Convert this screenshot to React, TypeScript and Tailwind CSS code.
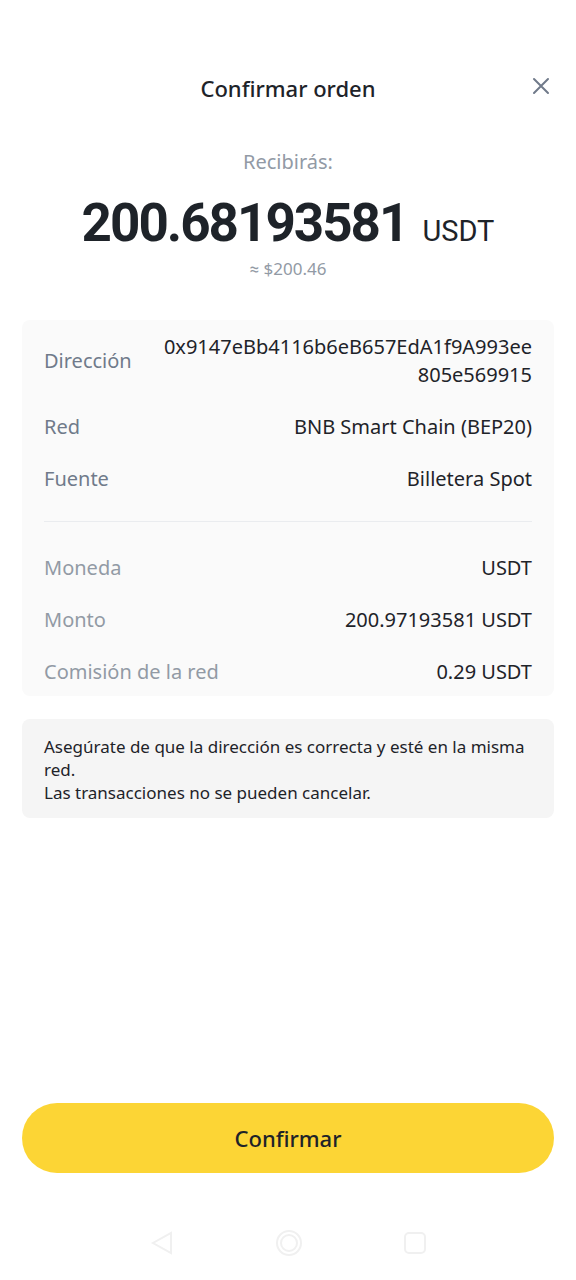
import React from 'react';

const rows1 = [
  { label: 'Red', value: 'BNB Smart Chain (BEP20)' },
  { label: 'Fuente', value: 'Billetera Spot' },
];

const rows2 = [
  { label: 'Moneda', value: 'USDT' },
  { label: 'Monto', value: '200.97193581 USDT' },
  { label: 'Comisión de la red', value: '0.29 USDT' },
];

const Row: React.FC<{ label: string; value: React.ReactNode; dark?: boolean }> = ({ label, value, dark }) => (
  <div className="flex items-center justify-between h-[28px]">
    <span className={dark ? 'text-[#707a8a]' : 'text-[#929aa5]'}>{label}</span>
    <span className="text-right text-[#1e2329]">{value}</span>
  </div>
);

const App: React.FC = () => {
  return (
    <div
      className="relative w-[576px] h-[1280px] bg-white flex flex-col overflow-hidden"
      style={{ fontFamily: '"Noto Sans", Roboto, sans-serif' }}
    >
      {/* header */}
      <div className="relative mt-[60px] h-[56px] flex items-center justify-center">
        <h1 className="text-[22px] font-medium text-[#1e2329]">Confirmar orden</h1>
        <button className="absolute right-[24px] top-[15px] w-[22px] h-[22px] flex items-center justify-center">
          <svg width="18" height="18" viewBox="0 0 18 18" fill="none" stroke="#707a8a" strokeWidth="2" strokeLinecap="round">
            <path d="M2 2L16 16M16 2L2 16" />
          </svg>
        </button>
      </div>

      {/* amount */}
      <div className="flex flex-col items-center">
        <p className="mt-[32px] text-[20px] leading-[28px] text-[#929aa5]">Recibirás:</p>
        <div className="mt-[17px] flex items-baseline gap-[15px]" style={{ fontFamily: 'Roboto, sans-serif' }}>
          <span className="text-[53px] leading-[60px] font-bold tracking-[-2px] text-[#1e2329]">200.68193581</span>
          <span className="text-[29px] text-[#1e2329]">USDT</span>
        </div>
        <p className="mt-[4px] text-[17px] leading-[22px] text-[#929aa5]">≈ $200.46</p>
      </div>

      {/* details card */}
      <div className="mx-[22px] mt-[40px] rounded-[8px] bg-[#fafafa] px-[22px] pt-[13px] pb-[10px] text-[20px]">
        <div className="flex items-center justify-between">
          <span className="text-[#707a8a]">Dirección</span>
          <span className="text-right leading-[28px] text-[#1e2329]">
            0x9147eBb4116b6eB657EdA1f9A993ee
            <br />
            805e569915
          </span>
        </div>
        <div className="mt-[24px] flex flex-col gap-[24px]">
          {rows1.map(r => (
            <Row key={r.label} label={r.label} value={r.value} dark />
          ))}
        </div>
        <div className="mt-[28px] h-px bg-[#eaecef]" />
        <div className="mt-[32px] flex flex-col gap-[24px]">
          {rows2.map(r => (
            <Row key={r.label} label={r.label} value={r.value} />
          ))}
        </div>
      </div>

      {/* notice */}
      <div className="mx-[22px] mt-[23px] rounded-[8px] bg-[#f5f5f5] px-[22px] pt-[16px] pb-[14px] text-[17px] leading-[23px] text-[#1e2329]">
        <p className="whitespace-nowrap">Asegúrate de que la dirección es correcta y esté en la misma</p>
        <p>red.</p>
        <p>Las transacciones no se pueden cancelar.</p>
      </div>

      <div className="flex-1" />

      {/* button */}
      <div className="px-[22px]">
        <button className="w-full h-[70px] rounded-full bg-[#fcd535] text-[22px] font-medium text-[#1e2329]">
          Confirmar
        </button>
      </div>

      {/* system nav */}
      <div className="mt-[55px] mb-[22px] h-[30px] flex items-center justify-center gap-[100px]">
        <svg width="26" height="28" viewBox="0 0 26 28" fill="none" stroke="#f0f0f0" strokeWidth="2" strokeLinecap="round">
          <path d="M22 4L22 24L4 14Z" />
        </svg>
        <svg width="28" height="28" viewBox="0 0 28 28" fill="none" stroke="#f0f0f0" strokeWidth="2">
          <circle cx="14" cy="14" r="12" />
          <circle cx="14" cy="14" r="8" />
        </svg>
        <svg width="24" height="24" viewBox="0 0 24 24" fill="none" stroke="#f0f0f0" strokeWidth="2">
          <rect x="2" y="2" width="20" height="20" rx="4" />
        </svg>
      </div>
    </div>
  );
};

export default App;
